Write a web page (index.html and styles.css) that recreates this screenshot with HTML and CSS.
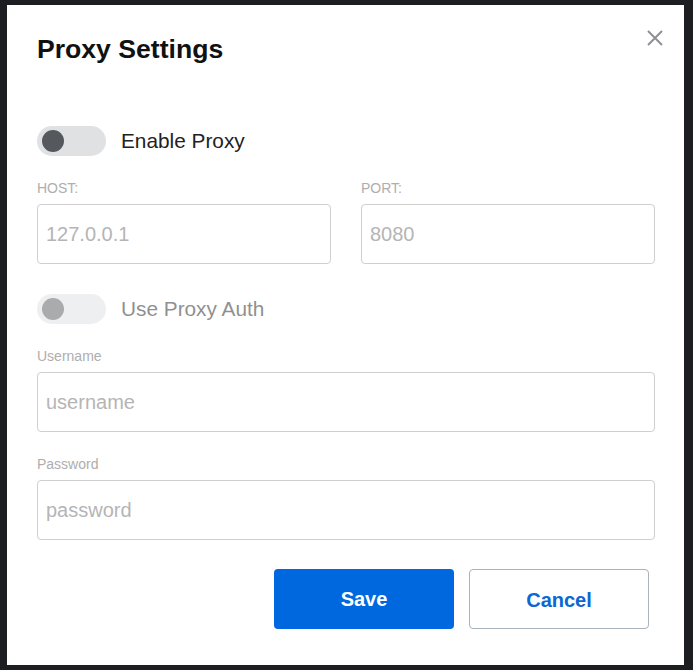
FILE: index.html
```html
<!DOCTYPE html>
<html lang="en">
<head>
  <meta charset="UTF-8" />
  <title>Proxy Settings</title>
  <meta name="viewport" content="width=device-width, initial-scale=1.0" />
  <link rel="stylesheet" href="styles.css">
</head>
<body>

  <!-- Proxy dialog -->
  <div class="dialog">
    <button class="close-btn" aria-label="Close">
      <svg width="16" height="16" viewBox="0 0 16 16">
        <path d="M1 1 L15 15 M15 1 L1 15" stroke="#8e9094" stroke-width="2" fill="none" />
      </svg>
    </button>

    <h1 class="title">Proxy Settings</h1>

    <div class="toggle-row">
      <span class="switch"><span class="knob"></span></span>
      <span class="toggle-label">Enable Proxy</span>
    </div>

    <div class="host-row">
      <div class="field">
        <label class="field-label">HOST:</label>
        <input type="text" class="text-input" placeholder="127.0.0.1" />
      </div>
      <div class="field">
        <label class="field-label">PORT:</label>
        <input type="text" class="text-input" placeholder="8080" />
      </div>
    </div>

    <div class="toggle-row auth-row disabled">
      <span class="switch"><span class="knob"></span></span>
      <span class="toggle-label">Use Proxy Auth</span>
    </div>

    <div class="field">
      <label class="field-label">Username</label>
      <input type="text" class="text-input" placeholder="username" />
    </div>

    <div class="field pass-field">
      <label class="field-label">Password</label>
      <input type="password" class="text-input" placeholder="password" />
    </div>

    <div class="actions">
      <button class="save-btn">Save</button>
      <button class="cancel-btn">Cancel</button>
    </div>
  </div>

</body>
</html>
```

FILE: styles.css
```css
* { box-sizing: border-box; }

body {
  margin: 0;
  padding: 5px 9px 5px 7px;
  background-color: #1c1e21;
  font-family: 'Liberation Sans', Arial, sans-serif;
  min-height: 100vh;
}

.dialog {
  position: relative;
  background-color: white;
  height: 660px;
  padding: 29px 29px 0 30px;
}

.close-btn {
  position: absolute;
  top: 25px;
  right: 21px;
  width: 16px;
  height: 16px;
  padding: 0;
  border: none;
  background: none;
  cursor: pointer;
}

.close-btn svg { display: block; }

.title {
  margin: 0;
  font-size: 26.6px;
  line-height: 30px;
  font-weight: bold;
  color: #111;
}

.toggle-row {
  display: flex;
  align-items: center;
  height: 30px;
  margin-top: 62px;
}

.switch {
  position: relative;
  width: 69px;
  height: 30px;
  border-radius: 15px;
  background-color: #dfe1e3;
  flex-shrink: 0;
}

.knob {
  position: absolute;
  top: 4px;
  left: 5px;
  width: 22px;
  height: 22px;
  border-radius: 50%;
  background-color: #55595d;
}

.toggle-label {
  margin-left: 15px;
  font-size: 20.8px;
  color: #222;
}

.disabled { opacity: 0.5; }

.auth-row { margin-top: 30px; }

.host-row {
  display: grid;
  grid-template-columns: 1fr 1fr;
  gap: 30px;
  margin-top: 24px;
}

.field {
  display: flex;
  flex-direction: column;
}

.auth-row + .field { margin-top: 24px; }

.pass-field { margin-top: 24px; }

.field-label {
  font-size: 14px;
  line-height: 16px;
  color: #aeaeae;
  margin-bottom: 8px;
}

.text-input {
  width: 100%;
  height: 60px;
  padding: 0 8px;
  font-family: 'Liberation Sans', Arial, sans-serif;
  font-size: 20px;
  color: #333;
  border: 1px solid #cfcfcf;
  border-radius: 4px;
  outline: none;
}

.text-input::placeholder {
  color: #b5b5b5;
}

.actions {
  display: flex;
  justify-content: flex-end;
  gap: 15px;
  margin-top: 29px;
  margin-right: 6px;
}

.save-btn,
.cancel-btn {
  width: 180px;
  height: 60px;
  font-family: 'Liberation Sans', Arial, sans-serif;
  font-size: 20px;
  font-weight: bold;
  border-radius: 4px;
  cursor: pointer;
}

.save-btn {
  background-color: #0068de;
  color: white;
  border: none;
}

.cancel-btn {
  background-color: white;
  color: #0a67d3;
  border: 1px solid #a9b3bb;
  padding-top: 4px;
}
```
